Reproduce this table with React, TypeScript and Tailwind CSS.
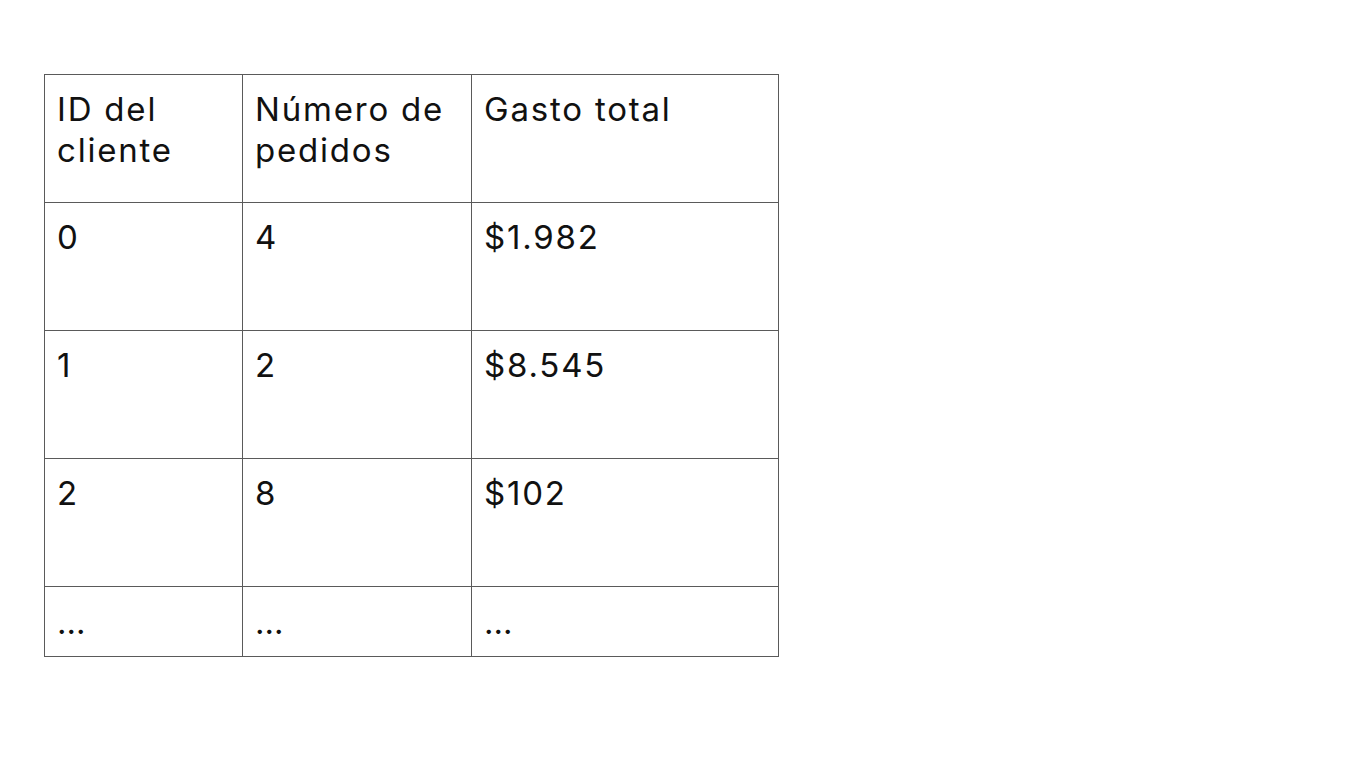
const rows = [
  ['0', '4', '$1.982'],
  ['1', '2', '$8.545'],
  ['2', '8', '$102'],
]

const cell = 'border border-[#5a5a5a] align-top pl-[12px] pt-[14px]'

export default function App() {
  return (
    <div className="min-h-screen bg-white pl-[44px] pt-[74px] font-['Inter',sans-serif] text-[33px] leading-[41px] tracking-[1.8px] text-[#111]">
      <table className="border-collapse table-fixed w-[734px]">
        <colgroup>
          <col className="w-[198px]" />
          <col className="w-[229px]" />
          <col className="w-[307px]" />
        </colgroup>
        <tbody>
          <tr className="h-[128px]">
            <td className={cell}>ID del<br />cliente</td>
            <td className={cell}>Número de<br />pedidos</td>
            <td className={cell}>Gasto total</td>
          </tr>
          {rows.map((r, i) => (
            <tr key={i} className="h-[128px]">
              {r.map((v, j) => <td key={j} className={cell}>{v}</td>)}
            </tr>
          ))}
          <tr className="h-[70px]">
            <td className={cell + ' !pt-[15px]'}>…</td>
            <td className={cell + ' !pt-[15px]'}>…</td>
            <td className={cell + ' !pt-[15px]'}>…</td>
          </tr>
        </tbody>
      </table>
    </div>
  )
}
